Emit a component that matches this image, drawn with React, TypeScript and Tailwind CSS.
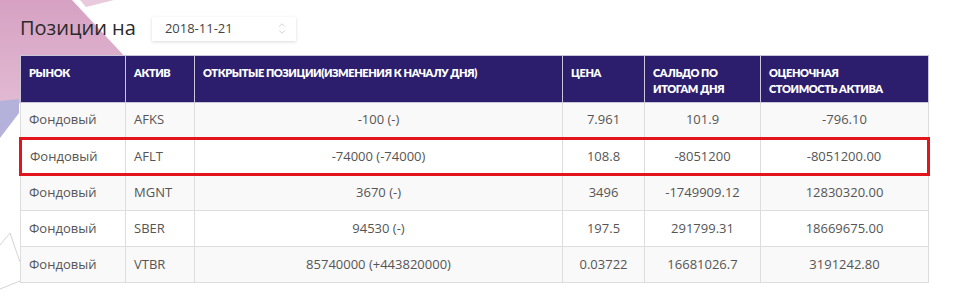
import { ChevronUp, ChevronDown } from 'lucide-react';

interface Position {
  market: string;
  asset: string;
  open: string;
  price: string;
  balance: string;
  value: string;
  highlight?: boolean;
}

const rows: Position[] = [
  { market: 'Фондовый', asset: 'AFKS', open: '-100 (-)', price: '7.961', balance: '101.9', value: '-796.10' },
  { market: 'Фондовый', asset: 'AFLT', open: '-74000 (-74000)', price: '108.8', balance: '-8051200', value: '-8051200.00', highlight: true },
  { market: 'Фондовый', asset: 'MGNT', open: '3670 (-)', price: '3496', balance: '-1749909.12', value: '12830320.00' },
  { market: 'Фондовый', asset: 'SBER', open: '94530 (-)', price: '197.5', balance: '291799.31', value: '18669675.00' },
  { market: 'Фондовый', asset: 'VTBR', open: '85740000 (+443820000)', price: '0.03722', balance: '16681026.7', value: '3191242.80' },
];

export default function App() {
  const td = 'h-[36px] border border-[#dddddd] px-[8px] align-middle';
  const th = 'border border-[#c8c6d8] px-[8px] pt-[9px] align-top text-left font-extrabold';
  const red = 'border-y-[3px] border-y-[#e3141c]';

  return (
    <div className="relative w-[960px] h-[306px] overflow-hidden bg-white font-['Open_Sans',sans-serif] text-[#555]">
      {/* decorative background */}
      <svg className="absolute left-0 top-0" width="140" height="306" viewBox="0 0 140 306">
        <defs>
          <linearGradient id="pink" x1="0" y1="0" x2="0" y2="1">
            <stop offset="0" stopColor="#d6a1c3" />
            <stop offset="1" stopColor="#e2bad2" />
          </linearGradient>
        </defs>
        <polygon points="0,0 72,0 128,60 128,100 0,104" fill="url(#pink)" />
        <polygon points="80,0 114,0 86,7" fill="#e9c9dc" />
        <polygon points="0,101 19,99 19,113 0,138" fill="#b4b2da" />
        <polyline points="0,245 10,233 20,262" fill="none" stroke="#d4d4d4" strokeWidth="1" />
        <line x1="0" y1="289" x2="20" y2="281" stroke="#d4d4d4" strokeWidth="1" />
      </svg>

      <div className="relative pl-[19px] pt-[16px]">
        <div className="flex items-center h-[25px]">
          <h2 className="ml-[1px] -mt-[1px] text-[20px] leading-none text-[#2a2a2a]">Позиции на</h2>
          <div className="ml-[16px] flex items-center justify-between w-[144px] h-[24px] bg-white pl-[13px] pr-[9px] shadow-[0_1px_3px_rgba(0,0,0,0.15)] text-[13px] text-[#444]">
            <span>2018-11-21</span>
            <span className="flex flex-col items-center text-[#b5b5b5] -space-y-[3px]">
              <ChevronUp size={10} strokeWidth={1.5} />
              <ChevronDown size={10} strokeWidth={1.5} />
            </span>
          </div>
        </div>

        <table className="mt-[14px] w-[908px] table-fixed border-collapse text-[13px]">
          <colgroup>
            <col className="w-[105px]" />
            <col className="w-[69px]" />
            <col className="w-[368px]" />
            <col className="w-[82px]" />
            <col className="w-[116px]" />
            <col className="w-[168px]" />
          </colgroup>
          <thead>
            <tr className="bg-[#2c1e6c] text-white font-['Lato',sans-serif] font-extrabold text-[11px] leading-[16px] tracking-[-0.4px] uppercase">
              <th className={`h-[47px] ${th}`}>Рынок</th>
              <th className={th}>Актив</th>
              <th className={th}>Открытые позиции(изменения к началу дня)</th>
              <th className={th}>Цена</th>
              <th className={th}>Сальдо по<br />итогам дня</th>
              <th className={th}>Оценочная<br />стоимость актива</th>
            </tr>
          </thead>
          <tbody>
            {rows.map((r, i) => {
              const bg = i % 2 === 0 ? 'bg-[#f9f9f9]' : 'bg-white';
              const h = r.highlight ? red : '';
              return (
                <tr key={r.asset} className={bg}>
                  <td className={`${td} ${h} ${r.highlight ? 'border-l-[3px] border-l-[#e3141c]' : ''} text-left`}>{r.market}</td>
                  <td className={`${td} ${h} text-left`}>{r.asset}</td>
                  <td className={`${td} ${h} text-center`}>{r.open}</td>
                  <td className={`${td} ${h} text-center`}>{r.price}</td>
                  <td className={`${td} ${h} text-center`}>{r.balance}</td>
                  <td className={`${td} ${h} ${r.highlight ? 'border-r-[3px] border-r-[#e3141c]' : ''} text-center`}>{r.value}</td>
                </tr>
              );
            })}
          </tbody>
        </table>
      </div>
    </div>
  );
}
